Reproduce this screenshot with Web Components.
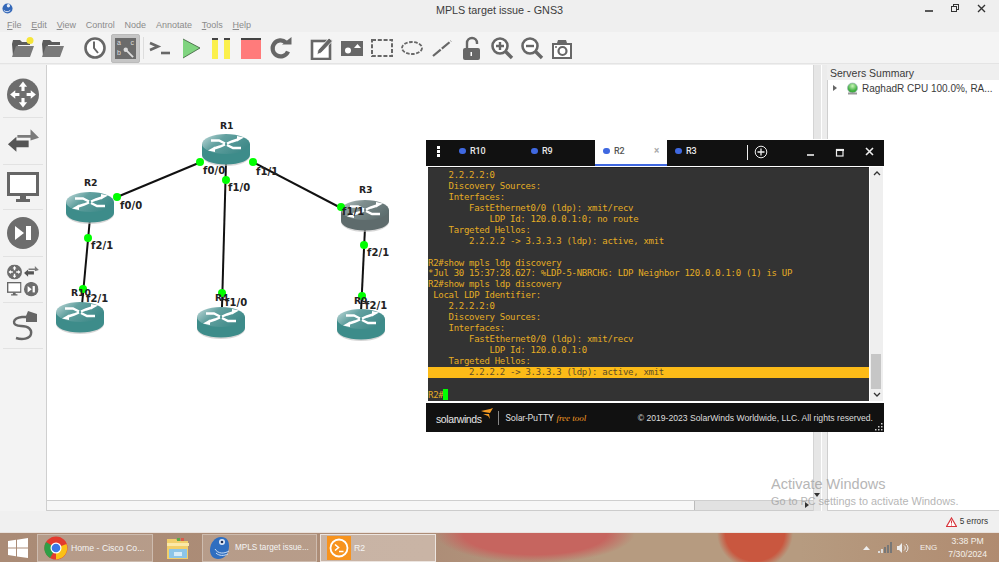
<!DOCTYPE html>
<html><head><meta charset="utf-8"><style>
html,body{margin:0;padding:0;width:999px;height:562px;overflow:hidden;background:#efefef;font-family:"Liberation Sans",sans-serif}
</style></head><body>
<gns-app></gns-app>
<script>
const def=(n,css,html)=>customElements.define(n,class extends HTMLElement{connectedCallback(){if(this.shadowRoot)return;const s=this.attachShadow({mode:'open'});s.innerHTML='<style>'+css+'</style>'+(typeof html==='function'?html(this):html);}});
const G='#676767';
const ic={
newp:`<path d="M1 8l1-4h7l2 2h8v3H7l-3 11H2z" fill="#5b5b5b"/><path d="M5 10h18l-4 11H1z" fill="#7a7a7a"/><circle cx="19" cy="4.500" r="3.500" fill="#f6e63a"/>`,
open:`<path d="M1 8l1-4h7l2 2h8v3H7l-3 11H2z" fill="#5b5b5b"/><path d="M5 10h18l-4 11H1z" fill="#7a7a7a"/>`,
clock:`<circle cx="12" cy="12" r="9.500" fill="#fff" stroke="${G}" stroke-width="2.600"/><path d="M11 5.500V12l4 5" fill="none" stroke="${G}" stroke-width="2"/>`,
prompt:`<path d="M2 7l8 3.500-8 3.500" fill="none" stroke="${G}" stroke-width="2.600"/><path d="M13 17h9" stroke="${G}" stroke-width="2.600"/>`,
play:`<path d="M4 3l17 9-17 10z" fill="#7fd47f"/><path d="M4 3l17 9-17 10" fill="none" stroke="#3a5a3a" stroke-width=".8"/>`,
pause:`<rect x="3" y="2" width="6" height="21" fill="#fbf04a"/><rect x="3" y="2" width="6" height="2" fill="#444"/><rect x="15" y="2" width="6" height="21" fill="#fbf04a"/><rect x="15" y="2" width="6" height="2" fill="#444"/>`,
stop:`<rect x="2" y="2" width="20" height="21" fill="#ff7b7b"/><rect x="2" y="2" width="20" height="2" fill="#444"/>`,
reload:`<path d="M19 15.500A8 8 0 1 1 17 6.500" fill="none" stroke="${G}" stroke-width="4.200"/><path d="M13 8.500h9.500V1z" fill="${G}"/>`,
note:`<rect x="2" y="5" width="18" height="18" fill="#fff" stroke="${G}" stroke-width="2.600"/><path d="M8 14L19 2l3.500 3L11 17l-4 1.500z" fill="${G}" stroke="#fff" stroke-width=".8"/>`,
image:`<rect x="1" y="5" width="22" height="15" fill="${G}"/><circle cx="8" cy="14.500" r="3" fill="#fff"/><path d="M14 12l3.500-4 3.500 4z" fill="#fff"/>`,
rect:`<rect x="2" y="4" width="20" height="16" fill="none" stroke="${G}" stroke-width="2" stroke-dasharray="4 1.800"/>`,
ell:`<ellipse cx="12" cy="12" rx="10" ry="6" fill="none" stroke="${G}" stroke-width="1.800" stroke-dasharray="3.500 1.500"/>`,
line:`<path d="M3 20L21 5" stroke="${G}" stroke-width="2.200" stroke-dasharray="10 1.500"/>`,
lock:`<path d="M7 12V7a5 5 0 0 1 10 0v1" fill="none" stroke="${G}" stroke-width="2.400"/><rect x="3" y="12" width="17" height="12" rx="2" fill="${G}"/><rect x="10.500" y="16" width="1.500" height="4" fill="#fff"/>`,
zin:`<circle cx="10" cy="10" r="7.500" fill="#fff" stroke="${G}" stroke-width="2.600"/><path d="M15.500 15.500L22 22" stroke="${G}" stroke-width="3.400"/><path d="M6 10h8M10 6v8" stroke="${G}" stroke-width="2.400"/>`,
zout:`<circle cx="10" cy="10" r="7.500" fill="#fff" stroke="${G}" stroke-width="2.600"/><path d="M15.500 15.500L22 22" stroke="${G}" stroke-width="3.400"/><path d="M6 10h8" stroke="${G}" stroke-width="2.400"/>`,
cam:`<path d="M2 7h5l1-3h8l1 3h5v16H2z" fill="${G}"/><rect x="4" y="9" width="16" height="12" fill="#fff"/><circle cx="12.500" cy="15" r="4" fill="#fff" stroke="${G}" stroke-width="2.200"/><circle cx="6" cy="11" r="1" fill="${G}"/>`
};
const svg=(k,w=24,h=24)=>`<svg width="${w}" height="${h}" viewBox="0 0 24 24">${ic[k]}</svg>`;

def('title-bar',`:host{display:grid;grid-template-columns:1fr auto 1fr;align-items:center;height:16px;font-size:10.800px;color:#3c3c3c;background:#efefef}
.t{margin-top:3px;white-space:nowrap}.ic{width:11px;height:11px;margin-left:2px;margin-top:1px;display:block}
.b{display:flex;gap:17px;padding-right:13px;align-items:center;justify-content:flex-end}`,
`<div><svg class="ic" viewBox="0 0 12 12"><circle cx="6" cy="6" r="5.500" fill="#3468b8"/><circle cx="7" cy="3" r="1.800" fill="#e9eef8"/><path d="M2 8c2 2 5 2 7 0" stroke="#e9eef8" fill="none"/></svg></div>
<div class="t">MPLS target issue - GNS3</div>
<div class="b"><svg width="9" height="9"><path d="M0 7h8" stroke="#333" stroke-width="1.600"/></svg><svg width="9" height="9"><rect x="2.500" y=".5" width="5" height="5" fill="none" stroke="#333"/><rect x=".5" y="2.500" width="5" height="5" fill="#efefef" stroke="#333"/></svg><svg width="9" height="9"><path d="M1 1l7 7M8 1l-7 7" stroke="#333" stroke-width="1.400"/></svg></div>`);

def('menu-bar',`:host{display:flex;height:16px;align-items:center;font-size:9px;color:#8b8b8b;background:#efefef;padding-left:7px;gap:9.800px;padding-top:1px;box-sizing:border-box}
span.u{text-decoration:underline}`,
`<span><span class="u">F</span>ile</span><span><span class="u">E</span>dit</span><span><span class="u">V</span>iew</span><span>Control</span><span>Node</span><span>Annotate</span><span><span class="u">T</span>ools</span><span><span class="u">H</span>elp</span>`);

def('tool-bar',`:host{display:flex;height:32px;align-items:center;background:#f4f4f4;box-shadow:inset 0 -1px 0 #e4e4e4;padding-left:3px}
.g{width:4px;height:14px;margin-right:1px;flex:none;background-image:radial-gradient(#c8c8c8 40%,transparent 45%);background-size:2px 2px}
.i{width:30px;height:30px;display:flex;align-items:center;justify-content:center;flex:none}
.a{background:#c5c5c5;border:1px solid #bbb;border-radius:2px;box-sizing:border-box;width:29px;height:29px}
.a>div{width:21px;height:21px;background:#6b6b6b;color:#ddd;font-size:7px;line-height:8px;display:grid;grid-template-columns:1fr 1fr;padding:1px 2px;box-sizing:border-box}
.s{width:1px;height:22px;background:#ddd;flex:none}`,
`<div class="g"></div><div class="i">${svg('newp')}</div><div class="i">${svg('open')}</div>
<div class="g" style="margin:0 2px 0 6px"></div><div class="i">${svg('clock')}</div>
<div class="i a" style="margin:0 3px 0 1px"><div><span>a</span><span style="text-align:right">c</span><span style="margin-top:2px">b</span><svg width="11" height="11" viewBox="0 0 12 12"><circle cx="3" cy="3" r="2.400" fill="#ddd"/><path d="M4 4l7 7" stroke="#ddd" stroke-width="2"/></svg></div></div>
<div class="s"></div><div class="i" style="margin-left:1px">${svg('prompt')}</div><div class="i" style="margin-left:1px">${svg('play')}</div><div class="i">${svg('pause')}</div><div class="i">${svg('stop')}</div><div class="i">${svg('reload')}</div>
<div class="g" style="margin:0 2px 0 5px"></div><div class="i">${svg('note')}</div><div class="i">${svg('image')}</div><div class="i">${svg('rect')}</div><div class="i">${svg('ell')}</div><div class="i">${svg('line')}</div><div class="i">${svg('lock')}</div><div class="i">${svg('zin')}</div><div class="i">${svg('zout')}</div><div class="i">${svg('cam')}</div>`);

const ring=`<circle cx="15.500" cy="15.500" r="15.500" fill="#6d6d6d"/><g fill="#fff"><path d="M15.500 3l4 5h-2.500v4h-3V8h-2.500z"/><path d="M15.500 28l4-5h-2.500v-4h-3v4h-2.500z"/><path d="M3 15.500l5-4v2.500h4v3H8v2.500z"/><path d="M28 15.500l-5-4v2.500h-4v3h4v2.500z"/></g>`;
const sw=`<path d="M11 7h14V1l9 9-9 3v-3H11z" fill="#7b7b7b"/><path d="M23 13H10V9l-9 8 9 8v-5h13z" fill="#555"/>`;
const mon=`<rect x="1.500" y="1.500" width="29" height="21" fill="#fff" stroke="#666" stroke-width="3"/><path d="M13 24h6v3h4v3H9v-3h4z" fill="#666"/>`;
const ff=`<circle cx="16" cy="16" r="16" fill="#6d6d6d"/><path d="M8 9l9 7-9 7z" fill="#fff"/><rect x="19" y="9" width="5" height="14" fill="#fff"/>`;
def('side-dock',`:host{display:flex;flex-direction:column;width:46px;flex:none;background:#f3f3f3;border-right:1px solid #cfcfcf;align-items:center;padding-top:13px}
.c{width:32px;padding:0 4px;display:flex;justify-content:center;border-bottom:1px solid #e2e2e2;margin-bottom:7px;flex:none;box-sizing:content-box}
svg{display:block}`,
`<div class="c" style="height:39px"><svg width="33" height="33" viewBox="0 0 31 31">${ring}</svg></div>
<div class="c" style="height:36px;padding-top:3px"><svg width="33" height="27" viewBox="0 0 34 28">${sw}</svg></div>
<div class="c" style="height:37px"><svg width="32" height="32">${mon}</svg></div>
<div class="c" style="height:39px"><svg width="32" height="32">${ff}</svg></div>
<div class="c" style="height:38px"><svg width="33" height="33" viewBox="0 0 66 66"><svg x="0" y="0" width="31" height="31" viewBox="0 0 31 31">${ring}</svg><svg x="34" y="2" width="32" height="26" viewBox="0 0 34 28">${sw}</svg><svg x="0" y="36" width="30" height="30" viewBox="0 0 32 32">${mon}</svg><svg x="35" y="36" width="30" height="30" viewBox="0 0 32 32">${ff}</svg></svg></div>
<div class="c" style="height:38px"><svg width="30" height="33" viewBox="0 0 30 33"><path d="M24 7H14C4 8 3 16 13 16c8 0 11 4 10 8-1 5-9 6-15 4" fill="none" stroke="#666" stroke-width="2.400"/><path d="M20 1l9 3v8H18V6z" fill="#666"/></svg></div>`);

def('router-node',`:host{position:absolute;display:block;width:48px;height:32px}svg{display:block}`,
`<svg width="48" height="32" viewBox="0 0 48 32"><defs><linearGradient id="t" x1="0" x2="1" y1="0" y2=".5"><stop offset="0" stop-color="var(--top1,#c4dcdc)"/><stop offset=".42" stop-color="var(--top2,#63a1a0)"/><stop offset="1" stop-color="var(--top3,#3f8a89)"/></linearGradient></defs>
<path d="M0 10v12c0 5 10 10 24 10s24-5 24-10V10z" fill="#bbb" opacity=".6"/><path d="M0 10v11c0 5 10 9.500 24 9.500s24-4.500 24-9.500V10z" fill="var(--side,#3d8c8a)"/><ellipse cx="24" cy="10" rx="24" ry="10" fill="url(#t)"/>
<g fill="none" stroke="#fff" stroke-width="2.400"><path d="M9 6.500h8l6 3"/><path d="M39 14h-8l-6-3"/><path d="M12 14.500l6-2 5-2"/><path d="M36 5.500l-6 2-5 2"/></g><g fill="#fff"><path d="M6 16.500l7-4v5.500z"/><path d="M42 3.500l-7 4v-5.500z"/></g></svg>`);

def('link-label',`:host{position:absolute;display:block;font:700 10px "DejaVu Sans",sans-serif;color:#222;white-space:nowrap;letter-spacing:.1px;line-height:12px}
:host([name]){font-size:9.300px;letter-spacing:-.1px}`,`<slot></slot>`);

const links=[[201,162,117,197],[226,162,222,307],[253,162,341,208],[90,218,82,305],[365,228,361,312]];
const dots=[[200,162],[117,197],[226,180],[253,162],[341,207],[88,238],[83,289],[222,293],[364,245],[362,296]];
def('net-canvas',`:host{display:block;position:relative;flex:1;background:#fff;min-width:0}
svg.l{position:absolute;inset:0}
.sv{position:absolute;right:0;top:0;bottom:0;width:9px;background:#e6e6e6;border-left:1px solid #d4d4d4;border-right:1px solid #fff;box-sizing:border-box}
.sh{position:absolute;left:0;right:9px;bottom:0;height:11px;background:#e2e2e2;border-top:1px solid #cfcfcf;border-bottom:1px solid #ccc;box-sizing:border-box}
.sh i{display:block;width:647px;height:100%;background:#f7f7f7;border-right:1px solid #bbb}
.au{position:absolute;right:2px;bottom:14px;width:0;height:0;border:3px solid transparent;border-top:4px solid #333;border-bottom:0}
.ar{position:absolute;right:13px;bottom:3px;width:0;height:0;border:3px solid transparent;border-left:4px solid #333;border-right:0}`,
()=>{const ox=47,oy=65;
 return `<svg class="l" width="775" height="446"><g stroke="#111" stroke-width="2">${links.map(l=>`<line x1="${l[0]-ox}" y1="${l[1]-oy}" x2="${l[2]-ox}" y2="${l[3]-oy}"/>`).join('')}</g></svg>
 ${[[202,134],[66,192],[341,200,1],[56,302],[197,307],[337,309]].map(r=>`<router-node style="left:${r[0]-ox}px;top:${r[1]-oy}px${r[2]?';--top1:#b8c4c4;--top2:#7f8f8f;--top3:#5f6f70;--side:#5e6b6c':''}"></router-node>`).join('')}
 <svg class="l" width="775" height="446"><g fill="#0f0">${dots.map(d=>`<circle cx="${d[0]-ox}" cy="${d[1]-oy}" r="4"/>`).join('')}</g></svg>
 ${[['R1',220,120,1],['R2',84,177,1],['R3',359,184,1],['R10',71,287,1],['R4',215,292,1],['R9',354,295,1],['f0/0',120,200],['f0/0',203,165],['f1/0',228,182],['f1/1',256,166],['f1/1',342,206],['f2/1',91,240],['f2/1',86,293],['f1/0',225,297],['f2/1',367,247],['f2/1',365,300]].map(l=>`<link-label ${l[3]?'name':''} style="left:${l[1]-ox}px;top:${l[2]-oy}px">${l[0]}</link-label>`).join('')}
 <div class="sv"></div><div class="sh"><i></i></div><div class="au"></div><div class="ar"></div>`});

def('servers-panel',`:host{display:flex;flex-direction:column;width:172px;color:#3a3a3a;flex:none}
.h{height:15px;line-height:16px;padding-left:3px;font-size:10.500px}
.b{flex:1;background:#fff;border:1px solid #cfcfcf;border-right:0;border-top:0;display:block}
.r{display:flex;align-items:center;height:16px;padding-left:5px;white-space:nowrap;font-size:10px}
.tr{width:0;height:0;border:3.500px solid transparent;border-left:4px solid #666;border-right:0;margin-right:9px;flex:none}
svg{flex:none;margin-right:3px}`,
`<div class="h">Servers Summary</div><div class="b"><div class="r"><span class="tr"></span><svg width="13" height="13" viewBox="0 0 13 13"><defs><radialGradient id="g" cy=".3"><stop offset="0" stop-color="#c8f5b8"/><stop offset="1" stop-color="#3fae3f"/></radialGradient></defs><circle cx="6.500" cy="6" r="5" fill="url(#g)" stroke="#9ab" stroke-width=".6"/><rect x="2" y="10.500" width="9" height="2" fill="#999"/></svg><span>RaghadR CPU 100.0%, RA...</span></div></div>`);

def('term-tab',`:host{display:flex;align-items:center;font:500 9px Roboto,"Liberation Sans",sans-serif;letter-spacing:-.2px;color:#e8e8e8;width:72px;height:25px;padding:0 0 3px 8px;box-sizing:border-box;position:relative;flex:none}
:host([active]){background:#fff;color:#555;border-bottom:2px solid #3f68e0;height:26px;padding-bottom:2px}
i{width:6.500px;height:6.500px;border-radius:50%;background:#3f68e0;margin-right:4.500px;flex:none}
b{position:absolute;right:8px;top:5px;font-size:10px;color:#aaa;font-weight:700;line-height:12px}`,
(el)=>`<i></i><slot></slot>${el.hasAttribute('active')?'<b>×</b>':''}`);

const lines=[
['    2.2.2.2:0'],['    Discovery Sources:'],['    Interfaces:'],['        FastEthernet0/0 (ldp): xmit/recv'],['            LDP Id: 120.0.0.1:0; no route'],['    Targeted Hellos:'],['        2.2.2.2 -> 3.3.3.3 (ldp): active, xmit'],[''],
['R2#show mpls ldp discovery'],['*Jul 30 15:37:28.627: %LDP-5-NBRCHG: LDP Neighbor 120.0.0.1:0 (1) is UP'],['R2#show mpls ldp discovery'],[' Local LDP Identifier:'],['    2.2.2.2:0'],['    Discovery Sources:'],['    Interfaces:'],['        FastEthernet0/0 (ldp): xmit/recv'],['            LDP Id: 120.0.0.1:0'],['    Targeted Hellos:'],['        2.2.2.2 -> 3.3.3.3 (ldp): active, xmit','hl'],[''],['R2#','cur']];
def('term-window',`:host{position:absolute;left:426px;top:139px;width:458px;height:293px;display:flex;flex-direction:column;background:#fff;font-family:"Liberation Sans",sans-serif}
.tabs{display:flex;height:26px;background:#111;align-items:flex-start;flex:none;margin-top:1px}
.dots{width:25px;height:23px;display:flex;flex-direction:column;align-items:center;justify-content:center;gap:1.500px;flex:none}
.dots i{width:2.500px;height:2.500px;background:#fff;display:block}
.sep{width:1px;height:15px;background:#eee;margin:5px 6px 0 0;flex:none}
.plus{margin-top:5px;flex:none}
.wb{display:flex;margin-left:auto;gap:17.500px;padding:6px 8px 0 0}
.body{flex:1;display:flex;padding:1px 1px 0 2px;background:#fff;min-height:0}
.term{flex:1;background:#333;font:9px/11px "DejaVu Sans Mono","Liberation Mono",monospace;color:#e5ad24;padding:2px 0 0;white-space:pre;overflow:hidden;border-top:1px solid #222}
.ln{height:10.950px;line-height:10.950px;letter-spacing:-.29px}
.hl{background:#fcbb18;color:#5c4c28}
.cur{display:inline-block;width:5px;height:11px;background:#0f0;vertical-align:-2px}
.sb{width:13px;background:#efefef;display:flex;flex-direction:column;align-items:center;justify-content:space-between;padding:4px 0;box-sizing:border-box;position:relative;margin-left:1px;flex:none}
.th{position:absolute;left:1px;right:2px;bottom:12px;height:35px;background:#c6c6c6}
.foot{height:29px;background:#111;display:flex;align-items:center;color:#ddd;flex:none;position:relative;white-space:nowrap;margin-top:2px}
.sw{margin:3px 0 0 10px;font-size:10.500px;color:#e6e6e6;letter-spacing:-.4px}
.bar{width:1px;height:14px;background:#888;margin:0 7px 0 4px;flex:none}
.sp{font:9px Roboto,"Liberation Sans",sans-serif;letter-spacing:-.2px}
em{font-family:"Liberation Serif",serif;color:#f39a24;font-size:9px;margin-left:3px}
.cp{margin-left:auto;padding-right:11px;font-size:8.650px}
.grip{position:absolute;right:1px;bottom:1px}`,
`<div class="tabs"><div class="dots"><i></i><i></i><i></i></div>
<term-tab>R10</term-tab><term-tab>R9</term-tab><term-tab active>R2</term-tab><term-tab style="width:80px">R3</term-tab>
<div class="sep"></div><svg class="plus" width="14" height="14"><circle cx="7" cy="7" r="5.800" fill="none" stroke="#eee"/><path d="M3.500 7h7M7 3.500v7" stroke="#eee" stroke-width="1.300"/></svg>
<div class="wb"><svg width="12" height="12"><path d="M2 9h7" stroke="#eee" stroke-width="1.600"/></svg><svg width="12" height="12"><rect x="1.500" y="3.500" width="6.500" height="6.500" fill="none" stroke="#eee" stroke-width="1.200"/><path d="M1 4h8" stroke="#eee" stroke-width="2"/></svg><svg width="12" height="12"><path d="M2 2l7 7M9 2l-7 7" stroke="#eee" stroke-width="1.600"/></svg></div></div>
<div class="body"><div class="term">${lines.map(l=>l[1]==='cur'?`<div class="ln">${l[0]}<span class="cur"></span></div>`:`<div class="ln ${l[1]||''}">${l[0].replace(/>/g,'&gt;')||' '}</div>`).join('')}</div>
<div class="sb"><svg width="8" height="5"><path d="M1 4l3-3 3 3" fill="none" stroke="#333" stroke-width="1.300"/></svg><div class="th"></div><svg width="8" height="5"><path d="M1 1l3 3 3-3" fill="none" stroke="#333" stroke-width="1.300"/></svg></div></div>
<div class="foot"><span class="sw">solarwinds</span><svg width="13" height="13" viewBox="0 0 13 13" style="margin:-6px 0 0 -1px;flex:none"><path d="M0 3l9-2 3-1-3 5-6-1zM2 6l6 0 1 5-2-3z" fill="#f39a24"/></svg><span class="bar"></span><span class="sp">Solar-PuTTY</span><em><i>free tool</i></em><span class="cp">© 2019-2023 SolarWinds Worldwide, LLC. All rights reserved.</span>
<svg class="grip" width="8" height="8"><g fill="#ccc"><rect x="6" y="0" width="1.500" height="1.500"/><rect x="3" y="3" width="1.500" height="1.500"/><rect x="6" y="3" width="1.500" height="1.500"/><rect x="0" y="6" width="1.500" height="1.500"/><rect x="3" y="6" width="1.500" height="1.500"/><rect x="6" y="6" width="1.500" height="1.500"/></g></svg></div>`);

def('status-bar',`:host{display:flex;height:21px;background:#f0f0f0;align-items:center;justify-content:flex-end;padding-right:11px;font-size:8.200px;color:#333;gap:2.500px;box-sizing:border-box}`,
`<svg width="11" height="10" viewBox="0 0 11 10"><path d="M5.500 1L10.500 9.500H.5z" fill="#fff" stroke="#d8333a" stroke-width="1.200"/><path d="M5.500 3.500v3M5.500 7.500v1" stroke="#d8333a"/></svg><span>5 errors</span>`);

def('task-btn',`:host{display:flex;align-items:center;height:28px;box-sizing:border-box;border:1px solid rgba(255,255,255,.32);background:rgba(255,255,255,.14);color:#f4f4f4;font-size:8.700px;white-space:nowrap;overflow:hidden;flex:none;gap:3px;padding-left:6px}
:host([on]){background:rgba(255,255,255,.34);border-color:rgba(255,255,255,.65);gap:3px}`,`<slot name="i"></slot><slot></slot>`);

def('task-bar',`:host{display:flex;height:30px;box-sizing:border-box;align-items:center;border-top:1px solid #e9e2de;gap:1px;
background:radial-gradient(ellipse 100px 30px at 535px 0,#c6655f 72%,rgba(198,101,95,0) 100%),radial-gradient(ellipse 38px 36px at 755px 0,#c9573f 78%,rgba(201,87,63,0) 100%),linear-gradient(90deg,#aa8b76 0,#ad8d77 430px,#b69b80 600px,#b69b80 800px,#b08b70 999px)}
.s{width:36px;display:flex;justify-content:center;flex:none}
.tray{margin-left:auto;display:flex;align-items:center;color:#f4f0ea;font-size:8px;padding-right:12px;height:100%}
.clk{text-align:center;line-height:12.500px;margin-left:11px;font-size:8.700px}
.f{width:47px;display:flex;justify-content:center;flex:none}`,
`<div class="s"><svg width="20" height="20" viewBox="0 0 20 20"><path d="M0 3l8-1.200V9.500H0zM9 1.700L20 0v9.500H9zM0 10.500h8v7.800L0 17zM9 10.500h11V20L9 18.400z" fill="#fff"/></svg></div>
<task-btn style="width:116px"><svg slot="i" width="24" height="24" viewBox="0 0 24 24"><circle cx="12" cy="12" r="11.500" fill="#e33b2e"/><path d="M12 12L22.500 8A11.500 11.500 0 0 1 12 23.500z" fill="#fbc116"/><path d="M12 12L6 22A11.500 11.500 0 0 1 2 6z" fill="#2f9f46"/><circle cx="12" cy="12" r="5.500" fill="#fff"/><circle cx="12" cy="12" r="4.300" fill="#3b78e7"/></svg>Home - Cisco Co...</task-btn>
<div class="f"><svg width="24" height="24" viewBox="0 0 24 24"><path d="M1 3h9l2 2h10v18H1z" fill="#f2cf6a"/><rect x="1" y="7" width="22" height="3" fill="#fbe9a8"/><rect x="3" y="13" width="18" height="9" fill="#8cc5e8"/><rect x="8" y="16" width="8" height="4" fill="#d8ecf7"/><rect x="11" y="2" width="3" height="3" fill="#5aa84a"/><rect x="15" y="2" width="3" height="3" fill="#d95a4a"/></svg></div>
<task-btn style="width:115px;font-size:8.200px"><svg slot="i" width="23" height="24" viewBox="0 0 23 24"><path d="M12 1c6 0 8 4 8 9 0 7-4 13-11 13C4 23 1 19 1 14 1 7 6 1 12 1z" fill="#2f6ec0"/><circle cx="13" cy="6" r="3" fill="#dfe8f6"/><circle cx="13" cy="6" r="1.300" fill="#1b2d55"/><path d="M6 13c3 5 9 5 14 2M7 17c3 3 8 3 12 1" stroke="#cfe0f4" fill="none"/></svg><span>MPLS target issue...</span></task-btn>
<task-btn on style="width:116px;margin-left:2px"><svg slot="i" width="24" height="24" viewBox="0 0 24 24"><rect width="24" height="24" fill="#f7931e"/><circle cx="12" cy="12" r="8.500" fill="none" stroke="#fff" stroke-width="1.800"/><path d="M8 8.500l3.500 3-3.500 3M12 15.500h4.500" fill="none" stroke="#fff" stroke-width="1.600"/></svg>R2</task-btn>
<div class="tray"><svg width="9" height="6"><path d="M1 5l3.500-4L8 5z" fill="#eee"/></svg>
<svg width="14" height="11" viewBox="0 0 14 11" style="margin-left:7px"><g fill="#777"><rect x="0" y="9" width="2" height="2" fill="#ddd"/><rect x="3" y="7" width="2" height="4" fill="#ddd"/><rect x="6" y="5" width="2" height="6"/><rect x="9" y="3" width="2" height="8"/><rect x="12" y="0" width="2" height="11"/></g></svg>
<svg width="13" height="12" viewBox="0 0 13 12" style="margin-left:5px"><path d="M0 4h2l3-3v10L2 8H0z" fill="#eee"/><path d="M7 3.500a3 3 0 0 1 0 5M9 2a5 5 0 0 1 0 8" fill="none" stroke="#eee"/></svg>
<span style="margin-left:10px">ENG</span><div class="clk">3:38 PM<br>7/30/2024</div></div>`);

def('gns-app',`:host{display:flex;flex-direction:column;width:999px;height:562px;position:relative;overflow:hidden;background:#efefef}
.main{flex:1;display:flex;min-height:0;padding-top:1px}
.wm{position:absolute;left:771px;top:476px;color:#9a9a9a;font-size:14.500px;line-height:17px;pointer-events:none;white-space:nowrap;opacity:.72}
.wm small{display:block;font-size:10.850px;margin-top:1px;line-height:14px}
.gap{width:5px;flex:none;background:#ececec}`,
`<title-bar></title-bar><menu-bar></menu-bar><tool-bar></tool-bar>
<div class="main"><side-dock></side-dock><net-canvas></net-canvas><div class="gap"></div><servers-panel></servers-panel></div>
<status-bar></status-bar><task-bar></task-bar>
<term-window></term-window>
<div class="wm">Activate Windows<small>Go to PC settings to activate Windows.</small></div>`);
</script></body></html>
